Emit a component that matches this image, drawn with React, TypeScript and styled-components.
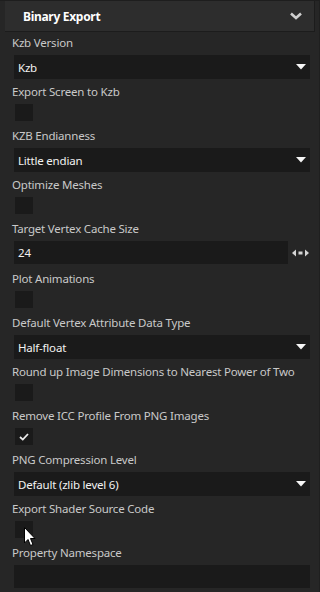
import React from 'react';
import styled, { createGlobalStyle } from 'styled-components';

type Field =
    | { kind: 'select'; label: string; value: string }
    | { kind: 'check'; label: string; checked?: boolean }
    | { kind: 'number'; label: string; value: string }
    | { kind: 'text'; label: string; value: string };

const fields: Field[] = [
    { kind: 'select', label: 'Kzb Version', value: 'Kzb' },
    { kind: 'check', label: 'Export Screen to Kzb' },
    { kind: 'select', label: 'KZB Endianness', value: 'Little endian' },
    { kind: 'check', label: 'Optimize Meshes' },
    { kind: 'number', label: 'Target Vertex Cache Size', value: '24' },
    { kind: 'check', label: 'Plot Animations' },
    { kind: 'select', label: 'Default Vertex Attribute Data Type', value: 'Half-float' },
    { kind: 'check', label: 'Round up Image Dimensions to Nearest Power of Two' },
    { kind: 'check', label: 'Remove ICC Profile From PNG Images', checked: true },
    { kind: 'select', label: 'PNG Compression Level', value: 'Default (zlib level 6)' },
    { kind: 'check', label: 'Export Shader Source Code' },
    { kind: 'text', label: 'Property Namespace', value: '' },
];

const GlobalStyle = createGlobalStyle`
    body {
        margin: 0;
        background: #262626;
        font-family: 'Noto Sans', 'Open Sans', sans-serif;
    }
`;

const Panel = styled.div`
    position: relative;
    width: 320px;
    height: 592px;
    overflow: hidden;
    background: #262626;
    border-top: 1px solid #1e1e1e;
    border-right: 1px solid #1f1f1f;
    box-sizing: border-box;
`;

const Header = styled.div`
    display: flex;
    align-items: center;
    justify-content: space-between;
    height: 30px;
    margin: 0 4px 0 5px;
    padding: 0 12px 0 18px;
    background: #2d2d2d;
    border-bottom: 1px solid #1c1c1c;
    border-right: 1px solid #1c1c1c;
    color: #ffffff;
    font-size: 12px;
    letter-spacing: -0.3px;
    font-weight: 700;
`;

const Body = styled.div`
    padding: 2px 9px 0 12px;
`;

const Property = styled.div<{ $after: number }>`
    display: flex;
    flex-direction: column;
    margin-bottom: ${p => p.$after}px;
`;

const Label = styled.div`
    height: 18px;
    line-height: 18px;
    margin-bottom: 3px;
    font-size: 11.5px;
    letter-spacing: -0.2px;
    color: #c9c9c9;
    white-space: nowrap;
`;

const Select = styled.div`
    display: flex;
    align-items: center;
    justify-content: space-between;
    height: 24px;
    margin-left: 2px;
    padding: 0 4px;
    background: #1a1a1a;
    color: #f2f2f2;
    font-size: 11.5px;
    letter-spacing: -0.2px;
`;

const InputRow = styled.div`
    display: flex;
    align-items: center;
    margin-left: 2px;
`;

const Input = styled.div`
    flex: 1;
    height: 23px;
    line-height: 23px;
    padding: 0 4px;
    background: #1a1a1a;
    color: #f2f2f2;
    font-size: 11.5px;
`;

const DragHandle = styled.div`
    display: flex;
    width: 20px;
    justify-content: center;
    padding-left: 2px;
`;

const Box = styled.div`
    display: flex;
    align-items: center;
    justify-content: center;
    width: 18px;
    height: 17px;
    margin-left: 3px;
    background: #1a1a1a;
`;

const Pointer = styled.svg`
    position: absolute;
    left: 24px;
    top: 526px;
`;

const Chevron = () => (
    <svg width="12" height="8" viewBox="0 0 12 8">
        <path d="M1 1.5 L6 6 L11 1.5" fill="none" stroke="#cfcfcf" strokeWidth="2.6" />
    </svg>
);

const Triangle = () => (
    <svg width="10" height="6" viewBox="0 0 10 6">
        <path d="M0 0 H10 L5 5.5 Z" fill="#f5f5f5" />
    </svg>
);

const Drag = () => (
    <svg width="17" height="8" viewBox="0 0 17 8">
        <path d="M0 4 L4 0.5 V7.5 Z" fill="#d4d4d4" />
        <rect x="6.5" y="2.5" width="4" height="3" fill="#d4d4d4" />
        <path d="M17 4 L13 0.5 V7.5 Z" fill="#d4d4d4" />
    </svg>
);

const Check = () => (
    <svg width="10" height="8" viewBox="0 0 10 8">
        <path d="M1 4 L3.8 6.6 L9 1" fill="none" stroke="#ececec" strokeWidth="1.8" />
    </svg>
);

function renderControl(f: Field) {
    switch (f.kind) {
        case 'select':
            return (
                <Select>
                    <span>{f.value}</span>
                    <Triangle />
                </Select>
            );
        case 'check':
            return <Box>{f.checked && <Check />}</Box>;
        case 'number':
            return (
                <InputRow>
                    <Input>{f.value}</Input>
                    <DragHandle>
                        <Drag />
                    </DragHandle>
                </InputRow>
            );
        case 'text':
            return (
                <InputRow>
                    <Input>{f.value}</Input>
                </InputRow>
            );
    }
}

const spacing = { select: 4, check: 6, number: 6, text: 6 };

export default function App() {
    return (
        <>
            <GlobalStyle />
            <Panel>
                <Header>
                    <span>Binary Export</span>
                    <Chevron />
                </Header>
                <Body>
                    {fields.map(f => (
                        <Property key={f.label} $after={spacing[f.kind]}>
                            <Label>{f.label}</Label>
                            {renderControl(f)}
                        </Property>
                    ))}
                </Body>
                <Pointer width="12" height="20" viewBox="0 0 12 20">
                    <path d="M0.5 0.5 V16 L4 12.5 L6.5 18.5 L9 17.5 L6.5 11.5 H11 Z" fill="#ffffff" stroke="#000000" strokeWidth="1" />
                </Pointer>
            </Panel>
        </>
    );
}
